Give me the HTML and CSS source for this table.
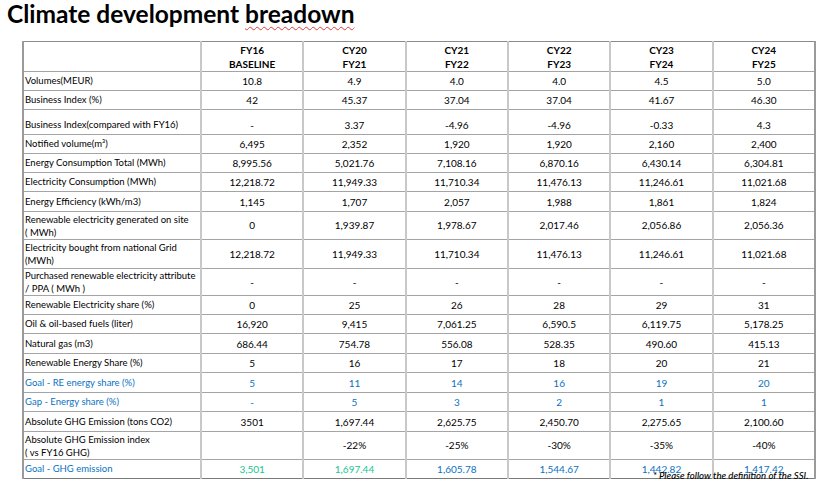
FILE: index.html
```html
<!DOCTYPE html>
<html lang="en">
<head>
<meta charset="utf-8">
<title>Climate development breadown</title>
<link rel="stylesheet" href="styles.css">
</head>
<body>
<h1 class="title">Climate development <span class="typo">breadown</span></h1>
<div class="sheet">
<table class="grid">
<colgroup><col class="c-label"><col><col><col><col><col><col></colgroup>
<thead>
<tr class="head">
<th></th>
<th>FY16<br>BASELINE</th>
<th>CY20<br>FY21</th>
<th>CY21<br>FY22</th>
<th>CY22<br>FY23</th>
<th>CY23<br>FY24</th>
<th>CY24<br>FY25</th>
</tr>
</thead>
<tbody>
<tr class="h19"><td>Volumes(MEUR)</td><td>10.8</td><td>4.9</td><td>4.0</td><td>4.0</td><td>4.5</td><td>5.0</td></tr>
<tr class="h19"><td>Business Index (%)</td><td>42</td><td>45.37</td><td>37.04</td><td>37.04</td><td>41.67</td><td>46.30</td></tr>
<tr class="h25"><td>Business Index(compared with FY16)</td><td>-</td><td>3.37</td><td>-4.96</td><td>-4.96</td><td>-0.33</td><td>4.3</td></tr>
<tr class="h19"><td>Notified volume(m³)</td><td>6,495</td><td>2,352</td><td>1,920</td><td>1,920</td><td>2,160</td><td>2,400</td></tr>
<tr class="h19"><td>Energy Consumption Total (MWh)</td><td>8,995.56</td><td>5,021.76</td><td>7,108.16</td><td>6,870.16</td><td>6,430.14</td><td>6,304.81</td></tr>
<tr class="h19"><td>Electricity Consumption (MWh)</td><td>12,218.72</td><td>11,949.33</td><td>11,710.34</td><td>11,476.13</td><td>11,246.61</td><td>11,021.68</td></tr>
<tr class="h20"><td>Energy Efficiency (kWh/m3)</td><td>1,145</td><td>1,707</td><td>2,057</td><td>1,988</td><td>1,861</td><td>1,824</td></tr>
<tr class="h28 two"><td>Renewable electricity generated on site<br>( MWh)</td><td>0</td><td>1,939.87</td><td>1,978.67</td><td>2,017.46</td><td>2,056.86</td><td>2,056.36</td></tr>
<tr class="h29 two"><td>Electricity bought from national Grid<br>(MWh)</td><td>12,218.72</td><td>11,949.33</td><td>11,710.34</td><td>11,476.13</td><td>11,246.61</td><td>11,021.68</td></tr>
<tr class="h27 two"><td>Purchased renewable electricity attribute<br>/ PPA ( MWh )</td><td>-</td><td>-</td><td>-</td><td>-</td><td>-</td><td>-</td></tr>
<tr class="h19"><td>Renewable Electricity share (%)</td><td>0</td><td>25</td><td>26</td><td>28</td><td>29</td><td>31</td></tr>
<tr class="h19"><td>Oil &amp; oil-based fuels (liter)</td><td>16,920</td><td>9,415</td><td>7,061.25</td><td>6,590.5</td><td>6,119.75</td><td>5,178.25</td></tr>
<tr class="h20"><td>Natural gas (m3)</td><td>686.44</td><td>754.78</td><td>556.08</td><td>528.35</td><td>490.60</td><td>415.13</td></tr>
<tr class="h19"><td>Renewable Energy Share (%)</td><td>5</td><td>16</td><td>17</td><td>18</td><td>20</td><td>21</td></tr>
<tr class="h20 goal"><td>Goal - RE energy share (%)</td><td>5</td><td>11</td><td>14</td><td>16</td><td>19</td><td>20</td></tr>
<tr class="h19 goal"><td>Gap - Energy share (%)</td><td>-</td><td>5</td><td>3</td><td>2</td><td>1</td><td>1</td></tr>
<tr class="h20"><td>Absolute GHG Emission (tons CO2)</td><td>3501</td><td>1,697.44</td><td>2,625.75</td><td>2,450.70</td><td>2,275.65</td><td>2,100.60</td></tr>
<tr class="h28 two"><td>Absolute GHG Emission index<br>( vs FY16 GHG)</td><td></td><td>-22%</td><td>-25%</td><td>-30%</td><td>-35%</td><td>-40%</td></tr>
<tr class="h19 goal"><td>Goal - GHG emission</td><td class="ok">3,501</td><td class="ok">1,697.44</td><td>1,605.78</td><td>1,544.67</td><td>1,442.82</td><td>1,417.42</td></tr>
</tbody>
</table>
<p class="note">* Please follow the definition of the SSI.</p>
</div>
</body>
</html>
```
FILE: styles.css
```css
html, body {
  margin: 0;
  padding: 0;
  background: #ffffff;
}
body {
  font-family: Lato, "Liberation Sans", sans-serif;
  color: #000000;
}
.title {
  margin: 0;
  padding-left: 7px;
  font-size: 24.5px;
  line-height: 28px;
  font-weight: 700;
  color: #000;
}
.typo {
  text-decoration: underline wavy #e23b3b;
  text-decoration-thickness: 1px;
  text-underline-offset: 3px;
}
.sheet {
  position: relative;
  margin: 13px 0 0 22px;
  width: 794px;
}
.grid {
  border-collapse: collapse;
  table-layout: fixed;
  width: 794px;
  font-size: 10px;
}
.c-label {
  width: 178px;
}
.grid th,
.grid td {
  padding: 0;
  border-top: 1px solid #a4a4a4;
  border-bottom: 1px solid #a4a4a4;
  border-left: 2px solid #c8c8c8;
  border-right: 2px solid #c8c8c8;
  text-align: center;
  vertical-align: middle;
  white-space: nowrap;
  line-height: 14px;
}
.grid tr > :first-child {
  text-align: left;
  padding-left: 1px;
  font-size: 9.5px;
  border-left: 2px solid #9a9a9a;
}
.grid tr > :last-child {
  border-right: 2px solid #9a9a9a;
}
.grid thead th {
  border-top: 1px solid #8a8a8a;
  font-weight: 700;
  line-height: 14px;
  padding-top: 1px;
}
.grid tbody tr:last-child td {
  border-bottom: 1px solid #7a7a7a;
}
.two td { line-height: 13px; }
.head { height: 30px; }
.h19 { height: 19px; }
.h20 { height: 20px; }
.h25 { height: 25px; }
.h27 { height: 27px; }
.h28 { height: 28px; }
.h29 { height: 29px; }
.h25 td { vertical-align: bottom; padding-bottom: 2px; }
.goal td { color: #0a72c2; }
.goal td.ok { color: #17c68f; }
.note {
  position: absolute;
  left: 631px;
  top: 429px;
  margin: 0;
  font-size: 9.6px;
  font-style: italic;
  font-weight: 500;
  line-height: 12px;
  white-space: nowrap;
  color: #000;
}
```
